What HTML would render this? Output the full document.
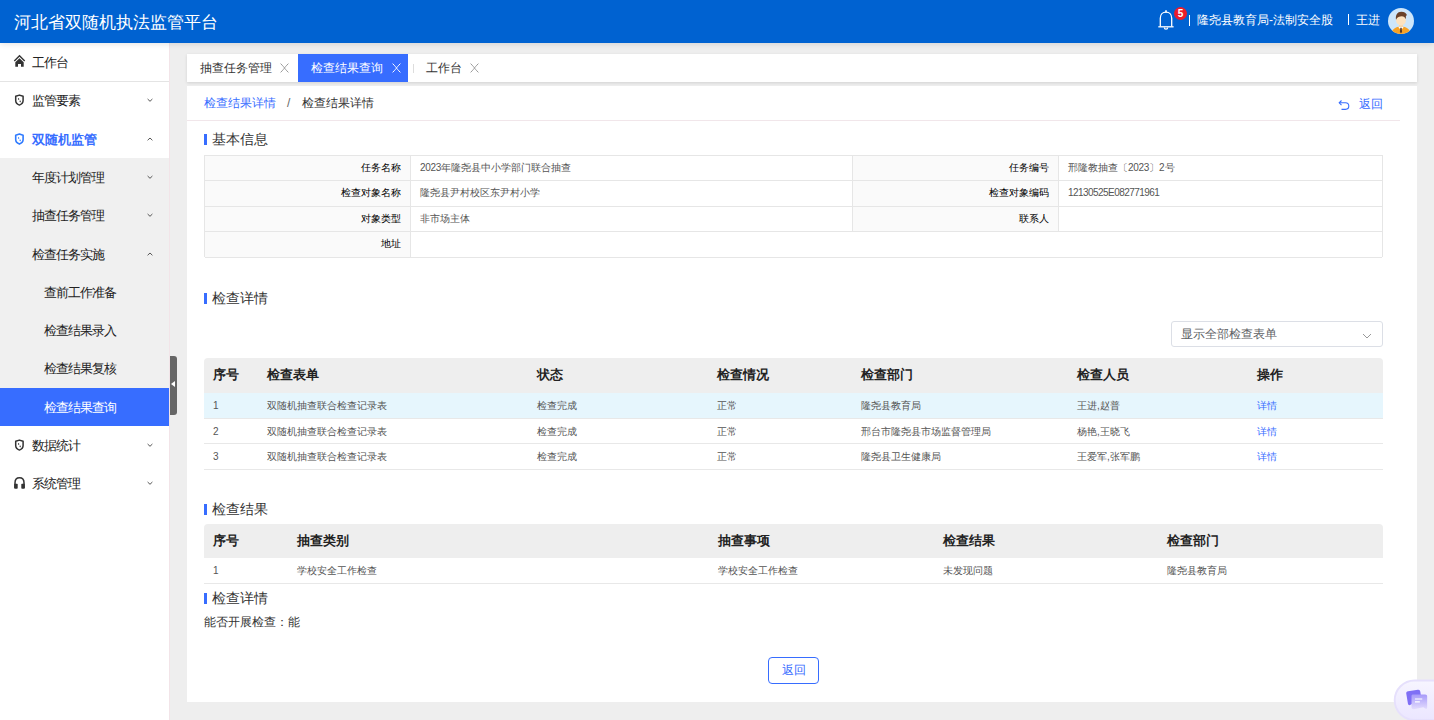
<!DOCTYPE html>
<html><head><meta charset="utf-8">
<style>
*{margin:0;padding:0;box-sizing:border-box}
html,body{width:1434px;height:720px;overflow:hidden;background:#eeeeee;font-family:"Liberation Sans",sans-serif;color:#333;position:relative}
svg{display:block}
#hdr{position:absolute;left:0;top:0;width:1434px;height:42.67px;background:#0062d1;color:#fff;z-index:5;box-shadow:0 1px 6px rgba(0,0,0,.12)}
#title{position:absolute;left:14px;top:11px;font-size:17px;line-height:24px;font-weight:500;white-space:nowrap}
#side{position:absolute;left:0;top:0;width:170px;height:720px;background:#fff;border-right:1px solid #f2e4e8}
.mi{position:absolute;left:0;width:169px;height:38.29px;font-size:13px;line-height:39.5px;letter-spacing:-1px;color:#222;white-space:nowrap}
.mi .t{position:absolute;left:32px;top:0}
.mi .ic{position:absolute;left:10px;top:7px;width:24px;height:24px}
.mi .ch{position:absolute;left:146px;top:15px;width:8px;height:8px}
.mi.sub{background:#f0f0f0}
.mi.sub2 .t{left:44px}
.mi.act{background:#376dff;color:#fff}
.mi.blue{color:#376dff;font-weight:bold;letter-spacing:0}
#handle{position:absolute;left:170px;top:356px;width:7px;height:59px;background:#666;border-radius:0 3px 3px 0;z-index:3}
#handle:after{content:"";position:absolute;left:1px;top:25px;border-right:4px solid #fff;border-top:3.5px solid transparent;border-bottom:3.5px solid transparent}
#tabs{position:absolute;left:187px;top:54px;width:1230px;height:27.7px;background:#fff;box-shadow:0 1px 3px rgba(0,0,0,.12)}
.tab{position:absolute;top:54px;height:27.7px;font-size:12px;line-height:29px;white-space:nowrap;color:#333}
.tab svg{position:absolute;top:9px}
#panel{position:absolute;left:187px;top:86.2px;width:1230px;height:615.5px;background:#fff}
.bc{position:absolute;top:94px;font-size:12px;line-height:18px;white-space:nowrap}
#bcline{position:absolute;left:187px;top:120px;width:1213px;height:1px;background:#f1e6ea}
.sec{position:absolute;left:204px;font-size:14px;line-height:18px;color:#333;padding-left:8px;white-space:nowrap}
.sec:before{content:"";position:absolute;left:0;top:4px;width:3px;height:11px;background:#376dff}
#info{position:absolute;left:204px;top:155px;width:1179px;height:102.2px;border:1px solid #e6e6e6;border-bottom:none}
.ir{position:absolute;left:0;width:1177px;border-bottom:1px solid #e6e6e6}
.ir div{position:absolute;top:0;height:100%;font-size:10px;line-height:24px;white-space:nowrap}
.lb{background:#fafafa;text-align:right;padding-right:9px;color:#000;border-right:1px solid #e6e6e6}
.vl{padding-left:9px;color:#555;border-right:1px solid #e6e6e6}
.ir div:last-child{border-right:none}
#sel{position:absolute;left:1171px;top:321px;width:211.5px;height:26.3px;border:1px solid #dcdfe6;border-radius:3px;background:#fff}
#sel span{position:absolute;left:9px;top:0;font-size:12px;line-height:25px;color:#606266;white-space:nowrap}
#sel svg{position:absolute;left:190px;top:9px}
.th{position:absolute;left:204px;width:1178.5px;background:#eeeeee;border-radius:4px 4px 0 0}
.th span{position:absolute;top:0;font-size:13px;font-weight:bold;line-height:34px;color:#222;white-space:nowrap}
.tr{position:absolute;left:204px;width:1178.5px;border-bottom:1px solid #e8e8e8;background:#fff}
.tr.hl{background:#e6f6fd}
.tr span{position:absolute;top:0;font-size:10px;line-height:25px;color:#555;white-space:nowrap}
.tr span.lk{color:#376dff}
#can{position:absolute;left:204px;top:613px;font-size:12px;line-height:18px;color:#333;white-space:nowrap}
#btn{position:absolute;left:768px;top:657px;width:51px;height:27px;border:1px solid #376dff;border-radius:4px;background:#fff;color:#376dff;font-size:12px;line-height:25px;text-align:center}
</style></head><body>
<div id="side">
<div class="mi" style="top:43.10px"><svg class="ic" viewBox="0 0 24 24"><path d="M4.3 10.9 L9.5 5.7 L14.7 10.9" fill="none" stroke="#333" stroke-width="1.4"/><path d="M5.3 12.2 L9.5 8.2 L13.7 12.2 L13.7 16.8 L11 16.8 L11 14 L8 14 L8 16.8 L5.3 16.8 Z" fill="#333"/></svg><span class="t">工作台</span></div>
<div class="mi" style="top:81.39px"><svg class="ic" viewBox="0 0 24 24"><path d="M9.4 7.1 L5.7 8.3 L5.7 12.6 C5.7 14.9 7.4 16.4 9.4 17.1 C11.4 16.4 13.1 14.9 13.1 12.6 L13.1 8.3 Z" fill="none" stroke="#333" stroke-width="1.5" stroke-linejoin="round"/><path d="M8.5 10.3 L8.7 11.8 M10.3 12.6 L10.1 14.1" stroke="#333" stroke-width="1.1"/></svg><span class="t">监管要素</span><svg class="ch" viewBox="0 0 8 8"><path d="M1.6 3 L4 5.3 L6.4 3" fill="none" stroke="#555" stroke-width="1"/></svg></div>
<div class="mi blue" style="top:119.68px"><svg class="ic" viewBox="0 0 24 24"><path d="M9.4 7.1 L5.7 8.3 L5.7 12.6 C5.7 14.9 7.4 16.4 9.4 17.1 C11.4 16.4 13.1 14.9 13.1 12.6 L13.1 8.3 Z" fill="none" stroke="#2f7bff" stroke-width="1.6" stroke-linejoin="round"/><path d="M8.5 10.3 L8.7 11.8 M10.3 12.6 L10.1 14.1" stroke="#2f7bff" stroke-width="1.1"/></svg><span class="t">双随机监管</span><svg class="ch" viewBox="0 0 8 8"><path d="M1.6 5.3 L4 3 L6.4 5.3" fill="none" stroke="#555" stroke-width="1"/></svg></div>
<div class="mi sub" style="top:157.97px"><span class="t">年度计划管理</span><svg class="ch" viewBox="0 0 8 8"><path d="M1.6 3 L4 5.3 L6.4 3" fill="none" stroke="#555" stroke-width="1"/></svg></div>
<div class="mi sub" style="top:196.26px"><span class="t">抽查任务管理</span><svg class="ch" viewBox="0 0 8 8"><path d="M1.6 3 L4 5.3 L6.4 3" fill="none" stroke="#555" stroke-width="1"/></svg></div>
<div class="mi sub" style="top:234.55px"><span class="t">检查任务实施</span><svg class="ch" viewBox="0 0 8 8"><path d="M1.6 5.3 L4 3 L6.4 5.3" fill="none" stroke="#555" stroke-width="1"/></svg></div>
<div class="mi sub sub2" style="top:272.84px"><span class="t">查前工作准备</span></div>
<div class="mi sub sub2" style="top:311.13px"><span class="t">检查结果录入</span></div>
<div class="mi sub sub2" style="top:349.42px"><span class="t">检查结果复核</span></div>
<div class="mi act sub2" style="top:387.71px"><span class="t">检查结果查询</span></div>
<div class="mi" style="top:426.00px"><svg class="ic" viewBox="0 0 24 24"><path d="M9.4 7.1 L5.7 8.3 L5.7 12.6 C5.7 14.9 7.4 16.4 9.4 17.1 C11.4 16.4 13.1 14.9 13.1 12.6 L13.1 8.3 Z" fill="none" stroke="#333" stroke-width="1.5" stroke-linejoin="round"/><path d="M8.5 10.3 L8.7 11.8 M10.3 12.6 L10.1 14.1" stroke="#333" stroke-width="1.1"/></svg><span class="t">数据统计</span><svg class="ch" viewBox="0 0 8 8"><path d="M1.6 3 L4 5.3 L6.4 3" fill="none" stroke="#555" stroke-width="1"/></svg></div>
<div class="mi" style="top:464.29px"><svg class="ic" viewBox="0 0 24 24"><path d="M5 17 L5 11.8 C5 8.4 7 6.7 9.5 6.7 C12 6.7 14 8.4 14 11.8 L14 17" fill="none" stroke="#333" stroke-width="1.5"/><rect x="4.2" y="12.7" width="3.5" height="5" rx="0.7" fill="#333"/><rect x="11.3" y="12.7" width="3.5" height="5" rx="0.7" fill="#333"/></svg><span class="t">系统管理</span><svg class="ch" viewBox="0 0 8 8"><path d="M1.6 3 L4 5.3 L6.4 3" fill="none" stroke="#555" stroke-width="1"/></svg></div>
</div>
<div id="handle"></div>
<div id="hdr">
  <div id="title">河北省双随机执法监管平台</div>
  <svg style="position:absolute;left:1154px;top:4px" width="24" height="28" viewBox="0 0 24 28"><path d="M12 6.2 L12 8.6" stroke="#fff" stroke-width="1.6"/><path d="M6.3 22.6 L6.3 14.2 C6.3 10.6 8.8 8.1 12 8.1 C15.2 8.1 17.7 10.6 17.7 14.2 L17.7 22.6" fill="none" stroke="#fff" stroke-width="1.3"/><path d="M4.3 22.8 L19.6 22.8" stroke="#fff" stroke-width="1.3"/><path d="M10.3 23.4 C10.3 25.6 13.7 25.6 13.7 23.4" fill="none" stroke="#fff" stroke-width="1.2"/></svg>
  <div style="position:absolute;left:1174px;top:7px;width:13px;height:13px;border-radius:50%;background:#ec1c2a;color:#fff;font-size:10px;font-weight:bold;line-height:13.5px;text-align:center">5</div>
  <div style="position:absolute;left:1189px;top:15px;width:1px;height:11px;background:#fff"></div>
  <div style="position:absolute;left:1197px;top:10px;font-size:12px;line-height:20px;font-weight:500;white-space:nowrap">隆尧县教育局-法制安全股</div>
  <div style="position:absolute;left:1348px;top:14px;width:1px;height:11px;background:#fff"></div>
  <div style="position:absolute;left:1356px;top:10px;font-size:12px;line-height:20px;font-weight:500;white-space:nowrap">王进</div>
  <svg style="position:absolute;left:1388px;top:7.5px" width="26" height="26" viewBox="0 0 26 26"><defs><clipPath id="cc"><circle cx="13" cy="13" r="13"/></clipPath></defs><circle cx="13" cy="13" r="13" fill="#cde6fb"/><g clip-path="url(#cc)"><rect x="11" y="15" width="4" height="5" fill="#f6d6ad"/><path d="M3 26.5 C3.5 21.5 7 19.5 10.5 18.7 L15.5 18.7 C19 19.5 22.5 21.5 23 26.5 Z" fill="#f8a225"/><path d="M10.2 18.7 L13 22.5 L15.8 18.7 Z" fill="#fff"/><path d="M12.3 19.8 L13.7 19.8 L14.1 24 L13 25.2 L11.9 24 Z" fill="#5b3a25"/><ellipse cx="13" cy="12.6" rx="4.9" ry="4.9" fill="#fde2bf"/><path d="M8 11.8 C7.3 7 9.5 3.8 13.2 3.8 C16.5 3.8 18.6 5.5 19 7.3 C18.3 7.5 17.8 7.7 17.9 8.4 L17.8 11.3 C17 9.2 15.8 8.3 13.8 8.3 C11.5 8.3 9.2 9 8 11.8 Z" fill="#6b4128"/></g></svg>
</div>
<div style="position:absolute;left:0;top:81px;width:169px;height:1px;background:#e4e4e4"></div>
<div id="tabs"></div>
<div class="tab" style="left:200px">抽查任务管理</div>
<div class="tab" style="left:280px"><svg viewBox="0 0 9 10" width="9" height="10"><path d="M0.6 0.6 C3 3 4 4.2 4.5 5 C5 5.8 6 7 8.4 9.4 M8.4 0.6 C6 3 5 4.2 4.5 5 C4 5.8 3 7 0.6 9.4" fill="none" stroke="#999" stroke-width="1"/></svg></div>
<div class="tab" style="left:298px;width:110px;background:#376dff;color:#fff;padding-left:13px">检查结果查询</div>
<div class="tab" style="left:391.5px"><svg viewBox="0 0 9 10" width="9" height="10"><path d="M0.6 0.6 C3 3 4 4.2 4.5 5 C5 5.8 6 7 8.4 9.4 M8.4 0.6 C6 3 5 4.2 4.5 5 C4 5.8 3 7 0.6 9.4" fill="none" stroke="#fff" stroke-width="1"/></svg></div>
<div style="position:absolute;left:413px;top:64px;width:1px;height:9px;background:#ddd"></div>
<div class="tab" style="left:425.5px">工作台</div>
<div class="tab" style="left:470px"><svg viewBox="0 0 9 10" width="9" height="10"><path d="M0.6 0.6 C3 3 4 4.2 4.5 5 C5 5.8 6 7 8.4 9.4 M8.4 0.6 C6 3 5 4.2 4.5 5 C4 5.8 3 7 0.6 9.4" fill="none" stroke="#999" stroke-width="1"/></svg></div>
<div id="panel"></div>
<div class="bc" style="left:204px;color:#376dff">检查结果详情</div>
<div class="bc" style="left:287px;color:#666">/</div>
<div class="bc" style="left:302px;color:#333">检查结果详情</div>
<svg style="position:absolute;left:1338px;top:99px" width="12" height="12" viewBox="0 0 12 12"><path d="M3.5 1.5 L1.2 3.8 L3.5 6.1" fill="none" stroke="#376dff" stroke-width="1.1"/><path d="M1.5 3.8 L7.5 3.8 C9.5 3.8 10.8 5.2 10.8 7.1 C10.8 9 9.5 10.4 7.5 10.4 L3.5 10.4" fill="none" stroke="#376dff" stroke-width="1.1"/></svg>
<div class="bc" style="left:1359px;top:95px;color:#376dff">返回</div>
<div id="bcline"></div>
<div class="sec" style="top:130px">基本信息</div>
<div id="info">
<div class="ir" style="top:0.0px;height:25.4px"><div class="lb" style="left:0;width:206px">任务名称</div><div class="vl" style="left:206px;width:442px"><span style="letter-spacing:-0.3px">2023</span>年隆尧县中小学部门联合抽查</div><div class="lb" style="left:648px;width:206px">任务编号</div><div class="vl" style="left:854px;width:324px">邢隆教抽查〔<span style="letter-spacing:-0.3px">2023</span>〕2号</div></div>
<div class="ir" style="top:25.4px;height:25.9px"><div class="lb" style="left:0;width:206px">检查对象名称</div><div class="vl" style="left:206px;width:442px">隆尧县尹村校区东尹村小学</div><div class="lb" style="left:648px;width:206px">检查对象编码</div><div class="vl" style="left:854px;width:324px"><span style="letter-spacing:-0.55px">12130525E082771961</span></div></div>
<div class="ir" style="top:51.3px;height:25.1px"><div class="lb" style="left:0;width:206px">对象类型</div><div class="vl" style="left:206px;width:442px">非市场主体</div><div class="lb" style="left:648px;width:206px">联系人</div><div class="vl" style="left:854px;width:324px"></div></div>
<div class="ir" style="top:76.4px;height:25.8px"><div class="lb" style="left:0;width:206px">地址</div><div class="vl" style="left:206px;width:972px"></div></div>
</div>
<div class="sec" style="top:289px">检查详情</div>
<div id="sel"><span>显示全部检查表单</span><svg width="10" height="10" viewBox="0 0 10 10"><path d="M1 3 L5 7 L9 3" fill="none" stroke="#999" stroke-width="1"/></svg></div>
<div class="th" style="top:358.4px;height:34.3px"><span style="left:9.0px">序号</span><span style="left:62.8px">检查表单</span><span style="left:333.0px">状态</span><span style="left:513.0px">检查情况</span><span style="left:657.0px">检查部门</span><span style="left:873.0px">检查人员</span><span style="left:1052.8px">操作</span></div><div class="tr hl" style="top:392.7px;height:26.3px"><span style="left:9.0px">1</span><span style="left:62.8px">双随机抽查联合检查记录表</span><span style="left:333.0px">检查完成</span><span style="left:513.0px">正常</span><span style="left:657.0px">隆尧县教育局</span><span style="left:873.0px">王进,赵普</span><span class="lk" style="left:1052.8px">详情</span></div><div class="tr" style="top:419.0px;height:25.0px"><span style="left:9.0px">2</span><span style="left:62.8px">双随机抽查联合检查记录表</span><span style="left:333.0px">检查完成</span><span style="left:513.0px">正常</span><span style="left:657.0px">邢台市隆尧县市场监督管理局</span><span style="left:873.0px">杨艳,王晓飞</span><span class="lk" style="left:1052.8px">详情</span></div><div class="tr" style="top:444.0px;height:26.0px"><span style="left:9.0px">3</span><span style="left:62.8px">双随机抽查联合检查记录表</span><span style="left:333.0px">检查完成</span><span style="left:513.0px">正常</span><span style="left:657.0px">隆尧县卫生健康局</span><span style="left:873.0px">王爱军,张军鹏</span><span class="lk" style="left:1052.8px">详情</span></div>
<div class="sec" style="top:500px">检查结果</div>
<div class="th" style="top:523.6px;height:34.7px"><span style="left:9.0px">序号</span><span style="left:93.2px">抽查类别</span><span style="left:514.0px">抽查事项</span><span style="left:739.0px">检查结果</span><span style="left:963.0px">检查部门</span></div><div class="tr" style="top:558.3px;height:25.7px"><span style="left:9.0px">1</span><span style="left:93.2px">学校安全工作检查</span><span style="left:514.0px">学校安全工作检查</span><span style="left:739.0px">未发现问题</span><span style="left:963.0px">隆尧县教育局</span></div>
<div class="sec" style="top:589px">检查详情</div>
<div id="can">能否开展检查：能</div>
<div id="btn">返回</div>
<svg style="position:absolute;left:1391px;top:677px" width="43" height="43" viewBox="0 0 44 44"><defs><linearGradient id="fg" x1="0" y1="0" x2="0" y2="1"><stop offset="0" stop-color="#f7f5ff"/><stop offset="1" stop-color="#ebe6ff"/></linearGradient><linearGradient id="fb" x1="0" y1="0" x2="0" y2="1"><stop offset="0" stop-color="#a79af9"/><stop offset="1" stop-color="#e3dcfd"/></linearGradient></defs><path d="M24 3.5 L50 3.5 L50 44 L24 44 C13 44 3.8 35 3.8 23.8 C3.8 12.6 13 3.5 24 3.5 Z" fill="url(#fg)" stroke="#e6e0fc" stroke-width="2"/><path d="M17.5 14.6 L27.5 13 C29 12.8 29.8 13.6 30 15 L31 22 L20 28.5 C18.6 29.3 17.6 28.6 17.3 27.2 L15.6 17 C15.4 15.7 16.2 14.8 17.5 14.6 Z" fill="#7f6ff5"/><path d="M22.5 18 L35 18 C36.3 18 37 18.7 37 20 L37 31.5 C37 32.6 36 33 35 32.3 L33 31 L23.5 33 C22.3 33.2 21 32.6 21 31.3 L21 19.5 C21 18.6 21.6 18 22.5 18 Z" fill="url(#fb)"/><path d="M24.5 22.5 L32 22.5 M24.5 25.5 L29.5 25.5" stroke="#fff" stroke-width="1.2"/></svg>
</body></html>
